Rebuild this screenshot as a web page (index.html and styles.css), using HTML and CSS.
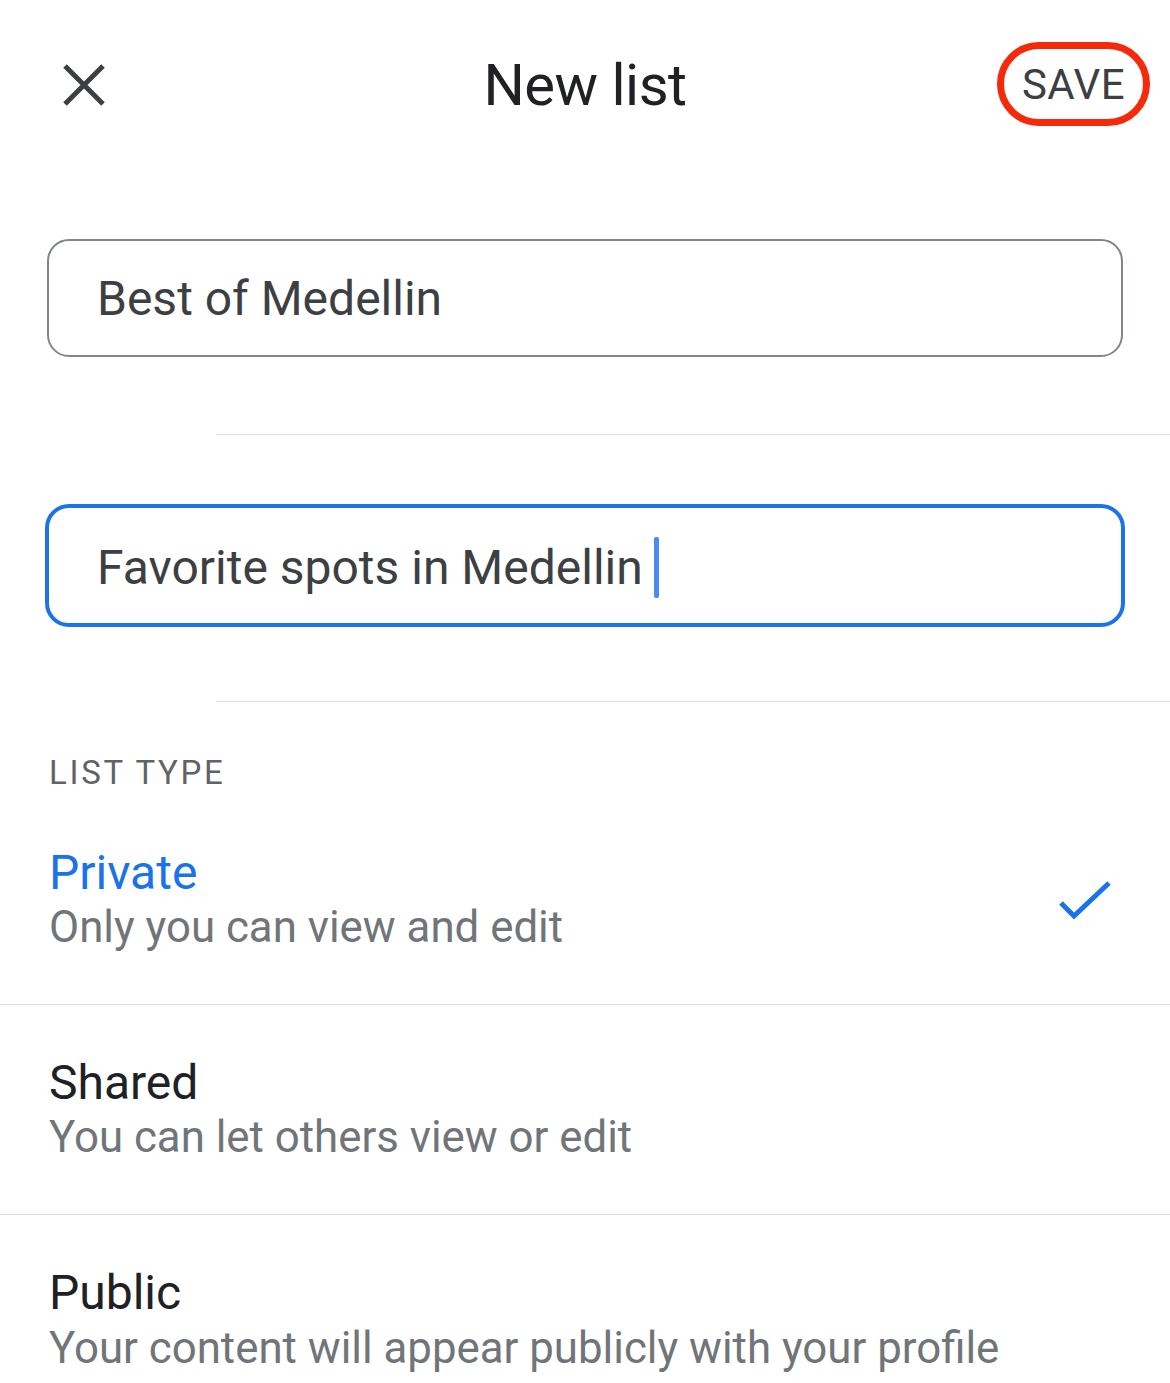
FILE: index.html
```html
<!DOCTYPE html>
<html lang="en">
<head>
<meta charset="utf-8">
<title>New list</title>
<link rel="stylesheet" href="styles.css">
</head>
<body>
<div class="screen">
  <header class="topbar">
    <div class="topbar-left">
      <svg class="close-icon" width="44" height="44" viewBox="0 0 44 44" aria-label="Close">
        <path d="M3 3 L41 41 M41 3 L3 41" stroke="#3c4043" stroke-width="5" fill="none"/>
      </svg>
    </div>
    <h1 class="title">New list</h1>
    <div class="topbar-right">
      <button class="save-btn">SAVE</button>
    </div>
  </header>

  <section class="field-block first">
    <div class="field">Best of Medellin</div>
  </section>
  <div class="inset-divider"></div>

  <section class="field-block second">
    <div class="field focused">Favorite spots in Medellin<span class="caret"></span></div>
  </section>
  <div class="inset-divider"></div>

  <div class="section-label">LIST TYPE</div>

  <div class="option">
    <div class="option-text">
      <div class="option-title selected">Private</div>
      <div class="option-sub">Only you can view and edit</div>
    </div>
    <svg class="check" width="56" height="42" viewBox="0 0 56 42">
      <path d="M4 24 L17 37 L52 4" stroke="#1a73e8" stroke-width="5" fill="none"/>
    </svg>
  </div>

  <div class="option">
    <div class="option-text">
      <div class="option-title">Shared</div>
      <div class="option-sub">You can let others view or edit</div>
    </div>
  </div>

  <div class="option last">
    <div class="option-text">
      <div class="option-title">Public</div>
      <div class="option-sub">Your content will appear publicly with your profile<br>name and picture. It will appear on Google search and Maps</div>
    </div>
  </div>
</div>
</body>
</html>
```

FILE: styles.css
```css
* { box-sizing: border-box; }
html, body {
  margin: 0;
  padding: 0;
  background: #ffffff;
}
body {
  font-family: Roboto, "Liberation Sans", Arial, sans-serif;
  color: #202124;
  overflow: hidden;
}
.screen {
  width: 1170px;
  height: 1383px;
  overflow: hidden;
}
.topbar {
  height: 170px;
  display: grid;
  grid-template-columns: 1fr auto 1fr;
  align-items: center;
}
.topbar-left {
  padding-left: 62px;
  display: flex;
  align-items: center;
}
.close-icon { display: block; }
.title {
  margin: 0;
  font-size: 58px;
  font-weight: 400;
  color: #202124;
  letter-spacing: -0.5px;
}
.topbar-right {
  display: flex;
  justify-content: flex-end;
  padding-right: 20px;
}
.save-btn {
  width: 153px;
  height: 84px;
  border: 7px solid #f42a0b;
  border-radius: 42px;
  background: #fff;
  font-family: Roboto, "Liberation Sans", Arial, sans-serif;
  font-size: 42px;
  color: #3c4043;
  letter-spacing: 0.5px;
  padding: 0;
  margin-top: -2px;
}
.field-block {
  padding: 0 47px;
}
.field-block.first { margin-top: 69px; }
.field-block.second { margin-top: 69px; padding: 0 45px; }
.field {
  height: 118px;
  border: 2.5px solid #80868b;
  border-radius: 22px;
  display: flex;
  align-items: center;
  padding-left: 48px;
  font-size: 48px;
  color: #3c4043;
}
.field.focused {
  height: 123px;
  border: 4px solid #1a73e8;
  border-radius: 24px;
  padding-left: 48px;
  padding-top: 4px;
}
.caret {
  display: inline-block;
  width: 5px;
  height: 61px;
  background: #4a8af4;
  border-radius: 2px;
  margin-left: 11px;
}
.inset-divider {
  margin-left: 216px;
  margin-top: 77px;
  height: 1px;
  background: #dadce0;
}
.field-block.second + .inset-divider { margin-top: 74px; }
.section-label {
  margin-top: 51px;
  margin-bottom: 3px;
  padding-left: 49px;
  font-size: 33px;
  line-height: 39px;
  color: #5f6368;
  letter-spacing: 2.7px;
}
.option {
  height: 210px;
  border-bottom: 1px solid #dadce0;
  display: flex;
  align-items: center;
  justify-content: space-between;
  padding: 0 57px 0 49px;
}
.option.last {
  border-bottom: none;
  align-items: flex-start;
  padding-top: 50px;
}
.option-title {
  font-size: 48px;
  line-height: 56px;
  color: #202124;
}
.option-title.selected { color: #1a73e8; }
.option-sub {
  font-size: 43.8px;
  line-height: 53px;
  color: #70757a;
}
.option.last .option-sub { line-height: 55px; }
.check { display: block; }
```
